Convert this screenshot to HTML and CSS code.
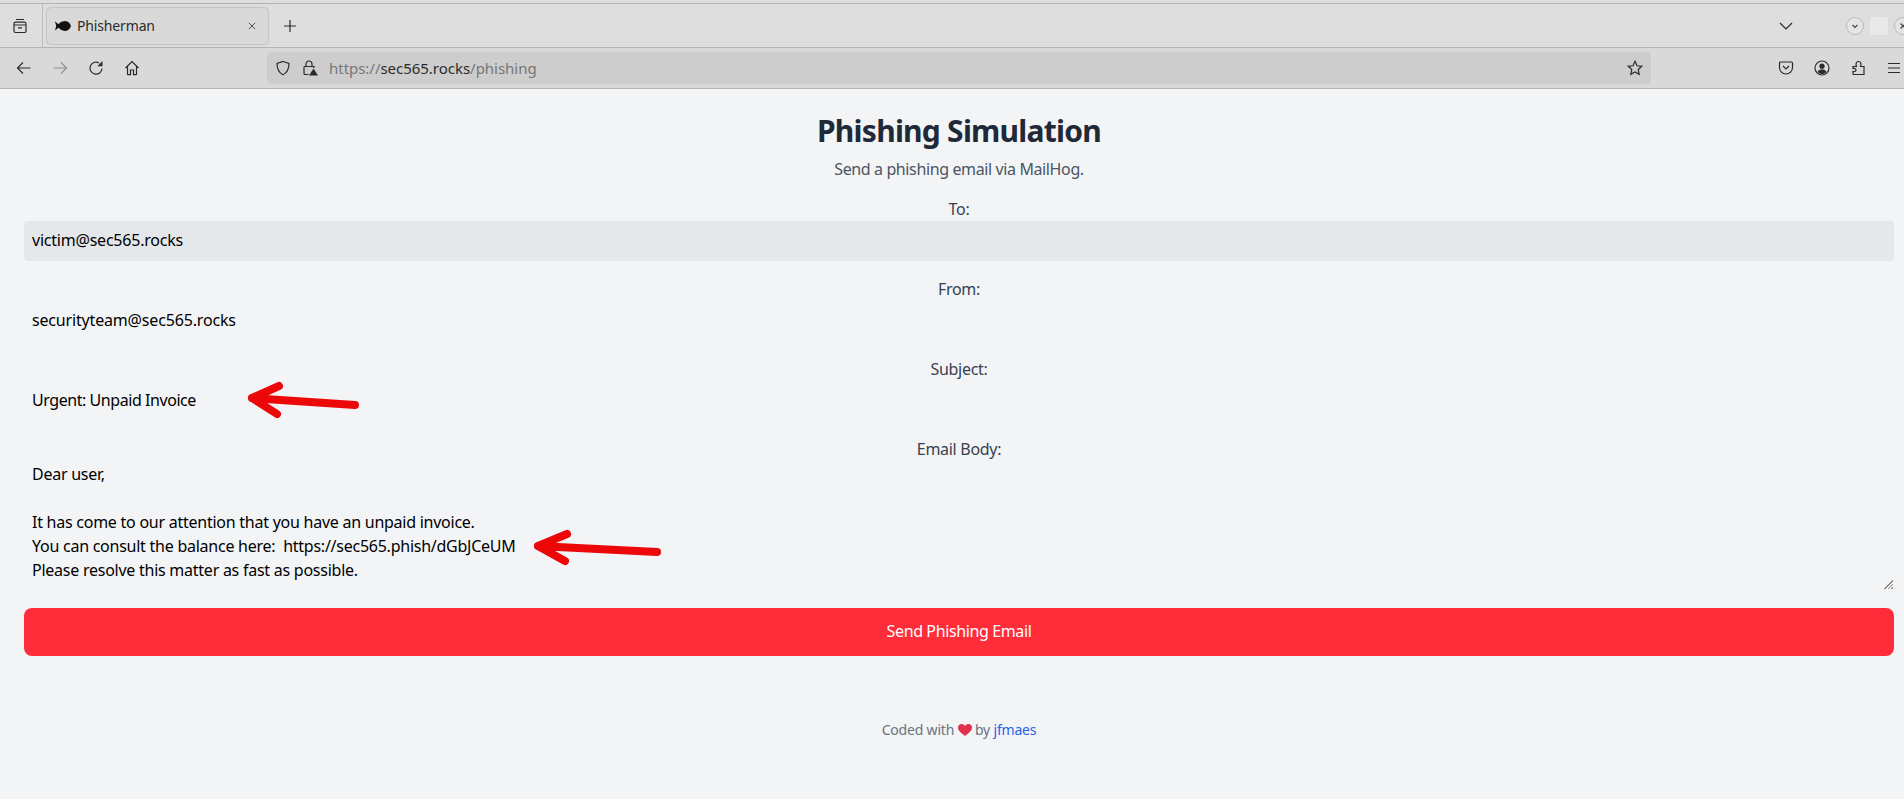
FILE: index.html
```html
<!DOCTYPE html>
<html lang="en">

<head>
    <meta charset="UTF-8">
    <title>Phisherman</title>
    <link rel="stylesheet" href="styles.css">
</head>

<body>
    <header class="chrome">
        <div class="tabbar">
            <div class="tabs-btn">
                <svg class="icon" viewBox="0 0 16 16"><path d="M4 1.500h8M3.500 4.200h9a1.500 1.500 0 0 1 1.500 1.500V7H2V5.700a1.500 1.500 0 0 1 1.500-1.500zM2 7h12v6a1.500 1.500 0 0 1-1.500 1.500h-9A1.500 1.500 0 0 1 2 13zM6 9.800h4"/></svg>
            </div>
            <div class="tab">
                <svg class="favicon" viewBox="0 0 16 10"><path d="M0 0.500 3.500 3.200C5 1.200 8 0 10.500 0 13 0 15 2.200 16 5 15 7.800 13 10 10.500 10 8 10 5 8.800 3.500 6.800L0 9.500 1.200 5z"/></svg>
                <span class="tab-title">Phisherman</span>
                <svg class="tab-close" viewBox="0 0 10 10"><path d="M1 1l8 8M9 1l-8 8"/></svg>
            </div>
            <svg class="icon new-tab" viewBox="0 0 16 16"><path d="M8 2v12M2 8h12"/></svg>
            <svg class="icon all-tabs" viewBox="0 0 16 16"><path d="M2 5l6 6 6-6"/></svg>
            <div class="win-btn"><svg viewBox="0 0 10 10"><path d="M2.500 4 5 6.500 7.500 4"/></svg></div>
            <div class="win-square"></div>
            <div class="win-btn"><svg viewBox="0 0 10 10"><path d="M2.500 2.500l5 5M7.500 2.500l-5 5"/></svg></div>
        </div>
        <div class="toolbar">
            <svg class="icon nav" viewBox="0 0 16 16"><path d="M14.500 8H1.500M7 2.500 1.500 8 7 13.500"/></svg>
            <svg class="icon nav off" viewBox="0 0 16 16"><path d="M1.500 8h13M9 2.500 14.500 8 9 13.500"/></svg>
            <svg class="icon nav" viewBox="0 0 16 16"><path d="M14 8.500A6 6 0 1 1 11 3"/><path class="solid" d="M14.500 1v5.200H9.300z"/></svg>
            <svg class="icon nav" viewBox="0 0 16 16"><path d="M1.500 8 8 1.500 14.500 8M3.500 6.500V14a.7.7 0 0 0 .7.7H6.500V10h3v4.700h2.300a.7.7 0 0 0 .7-.7V6.500"/></svg>
            <div class="urlbar">
                <svg class="icon url-shield" viewBox="0 0 16 16"><path d="M8 1.500 14 3.500C14 9 12.500 12.500 8 14.800 3.500 12.500 2 9 2 3.500z"/></svg>
                <svg class="icon url-lock" viewBox="0 0 16 16"><path d="M4 6.500V4a3 3 0 0 1 6 0v2.500M2 6.500h10V8M6.500 14.500H3a1 1 0 0 1-1-1v-7"/><path class="solid" d="M11.500 8.500 16 15.500H7z"/></svg>
                <span class="url"><span class="url-dim">https://</span>sec565.rocks<span class="url-dim">/phishing</span></span>
                <svg class="icon url-star" viewBox="0 0 16 16"><path d="M8 1.300l2 4.500 4.800.5-3.600 3.200 1 4.800L8 11.900l-4.200 2.400 1-4.800L1.200 6.300 6 5.800z"/></svg>
            </div>
            <svg class="icon tool pocket" viewBox="0 0 16 16"><path d="M2.500 2h11a1 1 0 0 1 1 1v4.500a6.500 6.500 0 0 1-13 0V3a1 1 0 0 1 1-1zM5 6l3 3 3-3"/></svg>
            <svg class="icon tool" viewBox="0 0 16 16"><circle cx="8" cy="8" r="7"/><circle class="solid" cx="8" cy="6.200" r="2.600"/><path class="solid" d="M3.600 12c.8-1.800 2.400-2.400 4.400-2.400s3.600.6 4.400 2.400C11 13.600 9.500 14 8 14s-3-.4-4.400-2z"/></svg>
            <svg class="icon tool" viewBox="0 0 16 16"><path d="M3 6.500h3.500C5.500 4.500 6 1.500 8.500 1.500s3 3 2 5H14v8H3.500a.5.5 0 0 1-.5-.5v-2.500c2 .5 3-.5 3-1.500s-1-2-3-1.500z"/></svg>
            <svg class="icon tool" viewBox="0 0 16 16"><path d="M2 3.500h12M2 8h12M2 12.500h12"/></svg>
        </div>
    </header>

    <main class="page">
        <h1>Phishing Simulation</h1>
        <p class="intro">Send a phishing email via MailHog.</p>
        <form class="mail-form">
            <label>To:</label>
            <div class="field field-locked">victim@sec565.rocks</div>
            <label>From:</label>
            <div class="field field-tight">securityteam@sec565.rocks</div>
            <label>Subject:</label>
            <div class="field field-subject">Urgent: Unpaid Invoice</div>
            <label>Email Body:</label>
            <div class="body-wrap">
                <textarea class="body-text" spellcheck="false">Dear user,

It has come to our attention that you have an unpaid invoice.
You can consult the balance here:  https://sec565.phish/dGbJCeUM
Please resolve this matter as fast as possible.</textarea>
                <span class="grip"></span>
            </div>
            <button type="button" class="send">Send Phishing Email</button>
        </form>
        <footer class="foot">
            Coded with
            <svg class="heart" viewBox="0 0 14 12"><path d="M7 12C3 9.200 0 6.800 0 3.600 0 1.400 1.700 0 3.600 0 5 0 6.300.7 7 2 7.700.7 9 0 10.400 0 12.300 0 14 1.400 14 3.600 14 6.800 11 9.200 7 12z"/></svg>
            by <a href="#">jfmaes</a>
        </footer>

        <!-- red arrows drawn on top of the screenshot -->
        <svg class="marks" viewBox="0 0 1904 710">
            <path d="M355 316 252 309M279 297 252 309 277 325"/>
            <path d="M657 463 538 457M567 445 538 457 565 472"/>
        </svg>
    </main>
</body>

</html>
```
FILE: styles.css
```css
* {
    margin: 0;
    padding: 0;
    box-sizing: border-box;
}

html,
body {
    height: 100%;
    overflow: hidden;
}

body {
    font-family: "Noto Sans", "Liberation Sans", sans-serif;
    background: #f3f4f6;
}

/* browser window */
.chrome {
    background: #dedede;
    padding-top: 3px;
    color: #2b2b2b;
}

.icon {
    width: 16px;
    height: 16px;
    fill: none;
    stroke: #2b2b2b;
    stroke-width: 1.2;
    flex: none;
}

.icon .solid {
    fill: #2b2b2b;
    stroke: none;
}

.tabbar {
    display: flex;
    align-items: center;
    height: 45px;
    border-top: 1px solid #b4b4b4;
    border-bottom: 1px solid #b4b4b4;
    overflow: hidden;
}

.tabs-btn {
    display: flex;
    align-items: center;
    justify-content: center;
    width: 43px;
    height: 100%;
    padding-right: 3px;
    border-right: 1px solid #bcbcbc;
}

.tab {
    display: flex;
    align-items: center;
    width: 221px;
    height: 36px;
    margin-left: 4px;
    padding: 0 12px 0 8px;
    background: #d9d9d9;
    border-radius: 4px;
    box-shadow: 0 0 2px rgba(0, 0, 0, 0.4);
}

.favicon {
    width: 16px;
    height: 10px;
    fill: #111;
}

.tab-title {
    margin-left: 6px;
    font-size: 14px;
    letter-spacing: -0.15px;
    flex: 1;
}

.tab-close {
    width: 8px;
    height: 8px;
    fill: none;
    stroke: #333;
    stroke-width: 1;
}

.new-tab {
    margin-left: 14px;
}

.all-tabs {
    margin-left: auto;
}

.win-btn {
    display: flex;
    align-items: center;
    justify-content: center;
    width: 18px;
    height: 18px;
    margin-left: 52px;
    flex: none;
    background: #e4e4e4;
    border: 1px solid #bbb;
    border-radius: 50%;
}

.win-btn svg {
    width: 10px;
    height: 10px;
    fill: none;
    stroke: #444;
    stroke-width: 1.2;
}

.win-square {
    width: 18px;
    height: 18px;
    margin-left: 6px;
    flex: none;
    background: #e9e9e9;
    border-radius: 3px;
}

.win-square + .win-btn {
    margin-left: 6px;
    margin-right: -8px;
}

.toolbar {
    display: flex;
    align-items: center;
    height: 41px;
    padding-left: 16px;
    background: #d9d9d9;
    border-bottom: 1px solid #b4b4b4;
}

.nav {
    margin-right: 20px;
}

.nav.off {
    opacity: 0.4;
}

.urlbar {
    display: flex;
    align-items: center;
    width: 1384px;
    height: 32px;
    margin-left: 107px;
    padding: 0 8px;
    background: #cdcdcd;
    border-radius: 4px;
}

.urlbar .url-lock {
    margin-left: 11px;
}

.url {
    margin-left: 11px;
    font-size: 15px;
    letter-spacing: -0.03px;
    flex: 1;
}

.url-dim {
    color: #777;
}

.tool {
    margin-left: 20px;
}

.tool.pocket {
    margin-left: 127px;
}

/* page */
.page {
    position: relative;
    height: 710px;
    padding: 24px 10px 0 24px;
    text-align: center;
}

h1 {
    font-size: 30px;
    line-height: 36px;
    font-weight: 700;
    letter-spacing: -0.75px;
    color: #1f2937;
}

.intro {
    margin-top: 8px;
    font-size: 16px;
    line-height: 24px;
    letter-spacing: -0.38px;
    color: #4b5563;
}

.mail-form {
    margin-top: 16px;
}

label {
    display: block;
    font-size: 16px;
    line-height: 24px;
    letter-spacing: -0.3px;
    color: #374151;
}

.field {
    height: 40px;
    margin-bottom: 16px;
    padding: 0 8px;
    font-size: 16px;
    line-height: 39px;
    letter-spacing: -0.22px;
    text-align: left;
    color: #000;
    border-radius: 4px;
}

.field-locked {
    background: #e5e7eb;
}

.field-tight {
    letter-spacing: -0.17px;
}

.field-subject {
    letter-spacing: -0.44px;
}

.body-wrap {
    position: relative;
    margin-bottom: 18px;
}

.body-text {
    display: block;
    width: 100%;
    height: 129px;
    padding: 1px 8px 0;
    font-family: inherit;
    font-size: 16px;
    line-height: 24px;
    letter-spacing: -0.25px;
    color: #000;
    background: transparent;
    border: 0;
    outline: 0;
    resize: none;
}

.grip {
    position: absolute;
    right: 1px;
    bottom: 1px;
    width: 10px;
    height: 10px;
    background: repeating-linear-gradient(135deg, #8a8a8a 0, #8a8a8a 1px, transparent 1px, transparent 2.5px);
    clip-path: polygon(100% 0, 100% 100%, 0 100%);
}

.send {
    display: block;
    width: 100%;
    height: 48px;
    padding-bottom: 2px;
    font-family: inherit;
    font-size: 16px;
    letter-spacing: -0.38px;
    color: #fff;
    background: #ff2d3a;
    border: 0;
    border-radius: 8px;
}

.foot {
    margin-top: 64px;
    font-size: 14px;
    line-height: 20px;
    letter-spacing: -0.2px;
    color: #6b7280;
}

.foot a {
    color: #2563eb;
    text-decoration: none;
}

.heart {
    width: 14px;
    height: 12px;
    fill: #e0304e;
    vertical-align: -1px;
}

.marks {
    position: absolute;
    top: 0;
    left: 0;
    width: 1904px;
    height: 710px;
    fill: none;
    stroke: #ec0808;
    stroke-width: 8;
    stroke-linecap: round;
    stroke-linejoin: round;
    pointer-events: none;
}
```
